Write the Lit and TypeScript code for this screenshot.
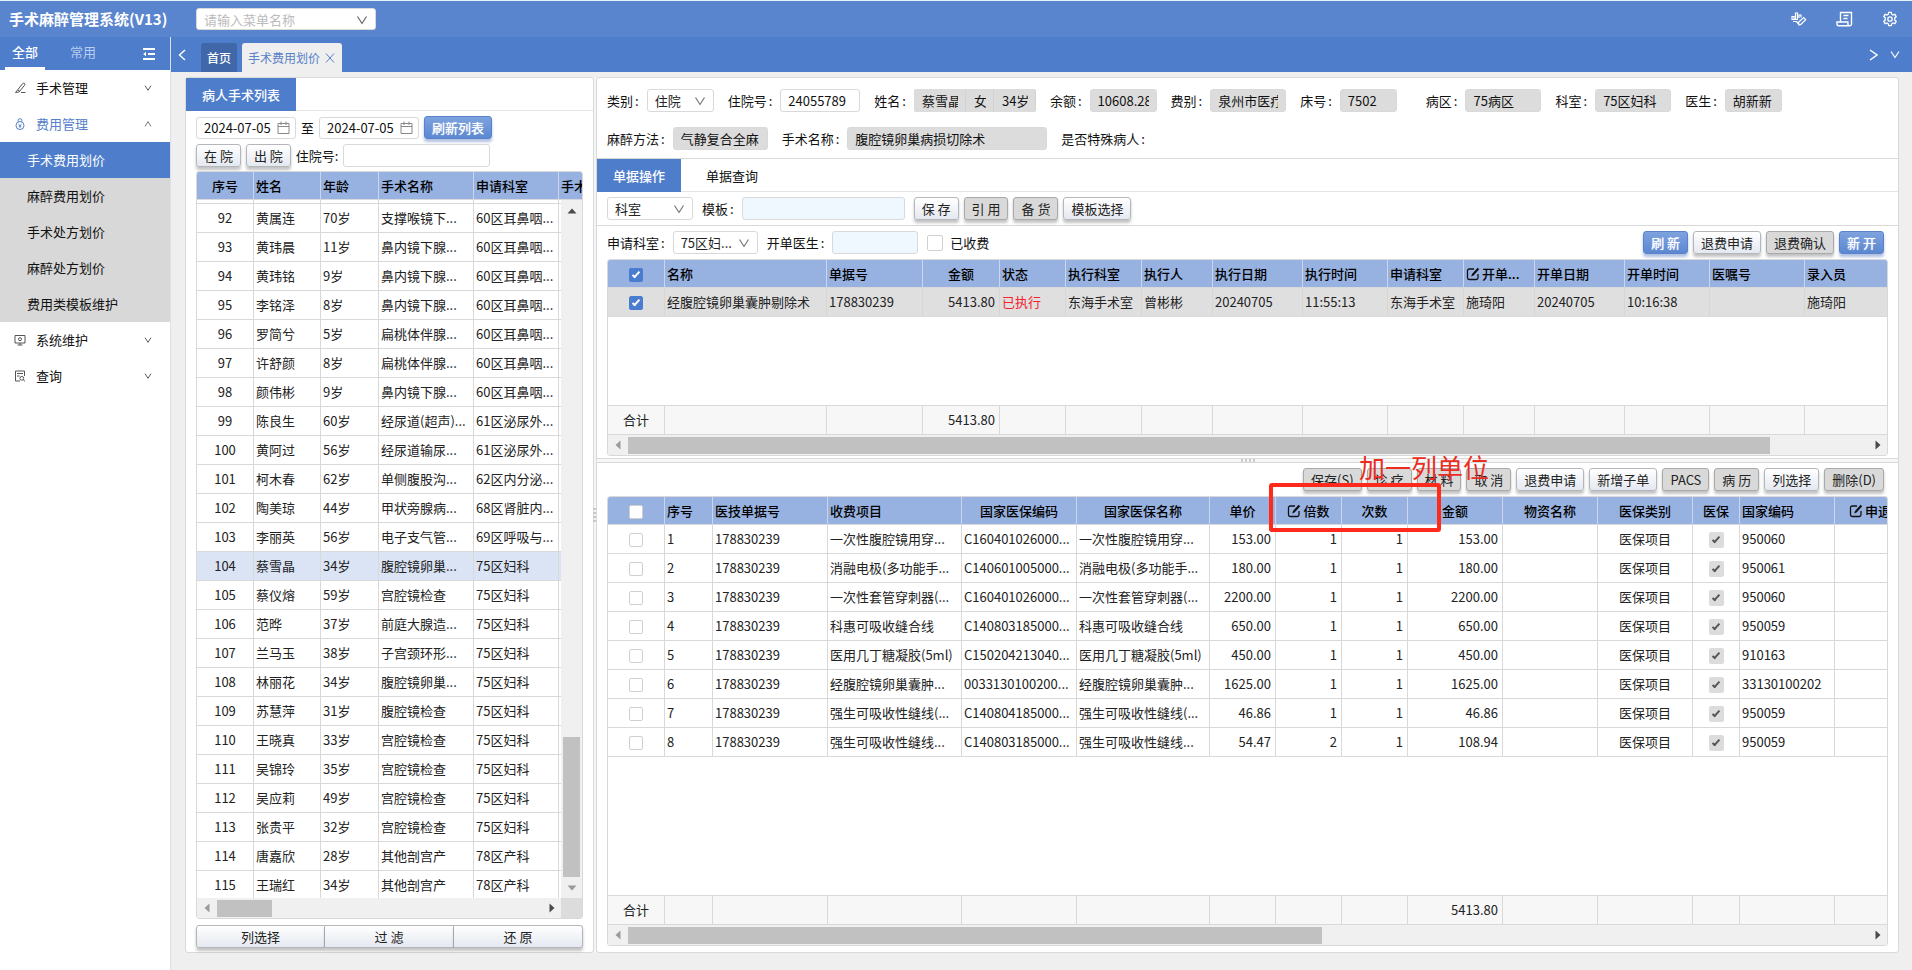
import { LitElement, html, css, svg, nothing, type TemplateResult } from 'lit';
import { customElement, property } from 'lit/decorators.js';
import { classMap } from 'lit/directives/class-map.js';
import { styleMap } from 'lit/directives/style-map.js';

type Align = 'left' | 'center' | 'right';
interface Column {
  title: string;
  /** Width in pixels; 0 takes whatever is left. */
  width: number;
  align?: Align;
  headAlign?: Align | 'indent';
  editable?: boolean;
  kind?: 'check' | 'lock' | 'status';
}

const chevron = (cls = '') => html`<svg class="chev ${cls}" viewBox="0 0 12 12" aria-hidden="true"><path d="M1.5 2.5 6 9.5l4.5-7" fill="none" stroke="currentColor" stroke-width="1.2"/></svg>`;

const base = css`
  *, *::before, *::after { box-sizing: border-box; }
  button, input, select { font: inherit; color: inherit; margin: 0; }
  svg { display: block; flex: none; }
  .chev { width: 12px; height: 12px; }
  .btn {
    height: 23px; padding: 0 7px; border: 1px solid #b4b6bb; border-radius: 3px;
    background: linear-gradient(#ffffff, #e4e8f0); color: #222; line-height: 20px;
    box-shadow: 0 3px 3px rgba(0, 0, 0, 0.24); white-space: nowrap;
  }
  .btn.dim { background: #d9d9d9; border-color: #a9a9a9; }
  .btn.primary {
    background: linear-gradient(#7ea2de, #5b88d1); border-color: #5a83cb; color: #fff;
    box-shadow: 0 3px 3px rgba(60, 100, 180, 0.4); text-shadow: 0 0 1px #fff;
  }
  .field {
    height: 23px; border: 1px solid #d9d9d9; border-radius: 3px; background: #fff;
    padding: 0 7px; min-width: 0; line-height: 21px; outline: none;
  }
  .field.gray { background: #dcdcdc; }
  .field.blue { background: #eff7ff; }
  .select { position: relative; display: inline-flex; color: #222; }
  .select select { width: 100%; appearance: none; padding-right: 20px; }
  .select .chev { position: absolute; right: 8px; top: 6px; color: #777; pointer-events: none; }
  .lab { white-space: nowrap; }
  .colon { margin: 0 8px 0 2px; }
  .check {
    appearance: none; width: 14px; height: 14px; border: 1px solid #d0d0d0; border-radius: 2px;
    background: #fff; display: inline-grid; place-content: center; vertical-align: middle;
  }
  .check:checked { background: #4a7dcf; border-color: #4a7dcf; color: #fff; }
  .check:checked::after {
    content: ''; width: 4px; height: 8px; border: solid currentColor; border-width: 0 2px 2px 0;
    transform: rotate(42deg); margin-top: -2px;
  }
  .check.lock { width: 15px; height: 16px; background: #dcdcdc; border-color: #dcdcdc; color: #555; }
`;

@customElement('scroll-bar')
class ScrollBar extends LitElement {
  @property({ type: Boolean, reflect: true }) vertical = false;
  @property({ type: Number }) start = 0;
  @property({ type: Number }) size = 50;

  static styles = css`
    :host { display: flex; align-items: center; height: 20px; background: #f0f0f0; flex: none; }
    :host([vertical]) { flex-direction: column; width: 21px; height: auto; }
    .arrow { width: 20px; height: 20px; flex: none; fill: #9b9b9b; }
    .arrow.on { fill: #4a4a4a; }
    .track { flex: 1; height: 17px; display: flex; }
    :host([vertical]) .track { height: auto; width: 17px; flex-direction: column; }
    .thumb { background: #c1c1c1; flex: none; }
  `;

  render() {
    const v = this.vertical;
    const gap = `${this.start}%`;
    const len = `${this.size}%`;
    return html`
      <svg class="arrow ${v ? 'on' : ''}" viewBox="0 0 20 20"><path d=${v ? 'M5.5 13.5h9L10 8.5z' : 'M12.5 5.5v9L7.5 10z'} /></svg>
      <div class="track">
        <div style=${styleMap(v ? { flex: `0 0 ${gap}` } : { width: gap })}></div>
        <div class="thumb" style=${styleMap(v ? { flex: `0 0 ${len}` } : { width: len })}></div>
      </div>
      <svg class="arrow ${v ? '' : 'on'}" viewBox="0 0 20 20"><path d=${v ? 'M5.5 7.5h9L10 12.5z' : 'M8.5 5.5v9L13.5 10z'} /></svg>`;
  }
}

@customElement('data-grid')
class DataGrid extends LitElement {
  @property({ attribute: false }) columns: Column[] = [];
  @property({ attribute: false }) rows: string[][] = [];
  @property({ attribute: false }) totals: string[] | null = null;
  @property({ type: Number }) selected = -1;
  @property({ type: Boolean }) allChecked = false;
  @property({ type: Number }) thumb = 50;
  @property({ type: Boolean }) scrolled = false;
  @property() tone: 'gray' | 'blue' = 'gray';

  static styles = [base, css`
    :host { display: flex; flex-direction: column; border: 1px solid #d9d9d9; border-radius: 3px; overflow: hidden; min-height: 0; min-width: 0; background: #fff; box-sizing: border-box; }
    .view { flex: 1; min-height: 0; overflow: hidden; position: relative; }
    table { border-collapse: separate; border-spacing: 0; table-layout: fixed; width: 100%; }
    th, td { height: 29px; padding: 0 2px; border-right: 1px solid #d9d9d9; border-bottom: 1px solid #d9d9d9; line-height: 20px; white-space: nowrap; overflow: hidden; text-align: left; font-weight: 400; color: #222; }
    th { height: 28px; background: #97b2e0; font-weight: 500; color: #000; border-right-color: #c9d6ee; }
    th:last-child, td:last-child { border-right: 0; }
    .center { text-align: center; }
    .right { text-align: right; padding-right: 4px; }
    .indent { padding-left: 14px; }
    .head { display: inline-flex; align-items: center; gap: 2px; vertical-align: middle; }
    .pen { width: 14px; height: 14px; }
    .sel.gray td { background: #dfdfdf; border-right-color: #d6d6d6; }
    .sel.blue td { background: #dae4f5; }
    .red { color: #f5222d; }
    .part td { height: 4px; line-height: 0; padding: 0; }
    .sum { flex: none; border-top: 1px solid #d9d9d9; }
    .sum td { background: #f7f7f7; height: 29px; }
    .vbar { position: absolute; right: 0; top: 28px; bottom: 0; }
    .hrow { display: flex; flex: none; }
    .hrow scroll-bar { flex: 1; }
    .corner { width: 21px; background: #dcdcdc; }
  `];

  private colgroup() {
    return html`<colgroup>${this.columns.map(c => html`<col style=${styleMap(c.width ? { width: `${c.width}px` } : {})}>`)}</colgroup>`;
  }

  private cell(c: Column, value: string, on: boolean): TemplateResult | string {
    if (c.kind === 'check') return html`<input class="check" type="checkbox" aria-label="选择" .checked=${on}>`;
    if (c.kind === 'lock') return html`<input class="check lock" type="checkbox" aria-label="医保" checked disabled>`;
    if (c.kind === 'status') return html`<span class="red">${value}</span>`;
    return value;
  }

  render() {
    return html`
      <div class="view">
        <table>
          ${this.colgroup()}
          <thead><tr>${this.columns.map(c => html`
            <th scope="col" class=${c.headAlign ?? c.align ?? 'left'}>${c.kind === 'check'
              ? html`<input class="check" type="checkbox" aria-label="全选" .checked=${this.allChecked}>`
              : html`<span class="head">${c.editable ? html`<svg class="pen" viewBox="0 0 14 14"><path d="M8 2H3.2A1.7 1.7 0 0 0 1.5 3.7v7.1a1.7 1.7 0 0 0 1.7 1.7h7.1a1.7 1.7 0 0 0 1.7-1.7V7" fill="none" stroke="#111" stroke-width="1.3"/><path d="M5.2 9.4 6 6.9 11.6.8l1.6 1.5-5.6 6.2z" fill="#111"/></svg>` : nothing}${c.title}</span>`}</th>`)}</tr></thead>
          <tbody>
            ${this.scrolled ? html`<tr class="part">${this.columns.map(() => html`<td></td>`)}</tr>` : nothing}
            ${this.rows.map((r, i) => html`<tr class=${classMap({ sel: i === this.selected, [this.tone]: true })}>
              ${this.columns.map((c, j) => html`<td class=${c.align ?? 'left'}>${this.cell(c, r[j] ?? '', i === this.selected)}</td>`)}
            </tr>`)}
          </tbody>
        </table>
        ${this.scrolled ? html`<scroll-bar class="vbar" vertical .start=${78.5} .size=${21.3}></scroll-bar>` : nothing}
      </div>
      ${this.totals ? html`<table class="sum">${this.colgroup()}<tbody><tr>
        ${this.columns.map((c, j) => html`<td class=${c.align ?? 'left'}>${this.totals![j] ?? ''}</td>`)}
      </tr></tbody></table>` : nothing}
      <div class="hrow"><scroll-bar .size=${this.thumb}></scroll-bar>${this.scrolled ? html`<div class="corner"></div>` : nothing}</div>`;
  }
}

const patientCols: Column[] = [
  { title: '序号', width: 57, align: 'center' },
  { title: '姓名', width: 67 },
  { title: '年龄', width: 58 },
  { title: '手术名称', width: 95 },
  { title: '申请科室', width: 85 },
  { title: '手术', width: 0 },
];
const patients = `黄属连,70,支撑喉镜下...,60区耳鼻咽...
黄玮晨,11,鼻内镜下腺...,60区耳鼻咽...
黄玮铭,9,鼻内镜下腺...,60区耳鼻咽...
李铭泽,8,鼻内镜下腺...,60区耳鼻咽...
罗简兮,5,扁桃体伴腺...,60区耳鼻咽...
许舒颜,8,扁桃体伴腺...,60区耳鼻咽...
颜伟彬,9,鼻内镜下腺...,60区耳鼻咽...
陈良生,60,经尿道(超声)...,61区泌尿外...
黄阿过,56,经尿道输尿...,61区泌尿外...
柯木春,62,单侧腹股沟...,62区内分泌...
陶美琼,44,甲状旁腺病...,68区肾脏内...
李丽英,56,电子支气管...,69区呼吸与...
蔡雪晶,34,腹腔镜卵巢...,75区妇科
蔡仪熔,59,宫腔镜检查,75区妇科
范晔,37,前庭大腺造...,75区妇科
兰马玉,38,子宫颈环形...,75区妇科
林丽花,34,腹腔镜卵巢...,75区妇科
苏慧萍,31,腹腔镜检查,75区妇科
王晓真,33,宫腔镜检查,75区妇科
吴锦玲,35,宫腔镜检查,75区妇科
吴应莉,49,宫腔镜检查,75区妇科
张贵平,32,宫腔镜检查,75区妇科
唐嘉欣,28,其他剖宫产,78区产科
王瑞红,34,其他剖宫产,78区产科`.split('\n').map((line, i) => {
  const [name, age, op, dept] = line.split(',');
  return [String(92 + i), name, `${age}岁`, op, dept, ''];
});

const billCols: Column[] = [
  { title: '', width: 57, align: 'center', kind: 'check' },
  { title: '名称', width: 162 },
  { title: '单据号', width: 96 },
  { title: '金额', width: 77, align: 'right', headAlign: 'center' },
  { title: '状态', width: 66, kind: 'status' },
  { title: '执行科室', width: 76 },
  { title: '执行人', width: 71 },
  { title: '执行日期', width: 90 },
  { title: '执行时间', width: 85 },
  { title: '申请科室', width: 76 },
  { title: '开单...', width: 71, editable: true },
  { title: '开单日期', width: 90 },
  { title: '开单时间', width: 85 },
  { title: '医嘱号', width: 95 },
  { title: '录入员', width: 0 },
];
const bills = [['', '经腹腔镜卵巢囊肿剔除术', '178830239', '5413.80', '已执行', '东海手术室', '曾彬彬', '20240705', '11:55:13', '东海手术室', '施琦阳', '20240705', '10:16:38', '', '施琦阳']];

const itemCols: Column[] = [
  { title: '', width: 57, align: 'center', kind: 'check' },
  { title: '序号', width: 48 },
  { title: '医技单据号', width: 115 },
  { title: '收费项目', width: 134 },
  { title: '国家医保编码', width: 115, headAlign: 'center' },
  { title: '国家医保名称', width: 133, headAlign: 'center' },
  { title: '单价', width: 66, align: 'right', headAlign: 'center' },
  { title: '倍数', width: 66, align: 'right', headAlign: 'center', editable: true },
  { title: '次数', width: 66, align: 'right', headAlign: 'center' },
  { title: '金额', width: 95, align: 'right', headAlign: 'center' },
  { title: '物资名称', width: 95, headAlign: 'center' },
  { title: '医保类别', width: 95, align: 'center' },
  { title: '医保', width: 47, align: 'center', kind: 'lock' },
  { title: '国家编码', width: 95 },
  { title: '申退', width: 0, headAlign: 'indent', editable: true },
];
const items = `一次性腹腔镜用穿...|C160401026000...|153.00|1|153.00|950060
消融电极(多功能手...|C140601005000...|180.00|1|180.00|950061
一次性套管穿刺器(...|C160401026000...|2200.00|1|2200.00|950060
科惠可吸收缝合线|C140803185000...|650.00|1|650.00|950059
医用几丁糖凝胶(5ml)|C150204213040...|450.00|1|450.00|910163
经腹腔镜卵巢囊肿...|0033130100200...|1625.00|1|1625.00|33130100202
强生可吸收性缝线(...|C140804185000...|46.86|1|46.86|950059
强生可吸收性缝线...|C140803185000...|54.47|2|108.94|950059`.split('\n').map((line, i) => {
  const [name, code, price, times, sum, nat] = line.split('|');
  return ['', String(i + 1), '178830239', name, code, name, price, times, '1', sum, '', '医保项目', '', nat, ''];
});

const menuIcons = {
  scalpel: svg`<path d="M1.5 10.5 8.6 1.6c1.4-1.3 3 .1 2 1.6L5 10l-3.5.5zM4 8l2 1.6M7 10.5h4.5"/>`,
  purse: svg`<circle cx="6" cy="7.5" r="4"/><path d="M4.3 3.6C3.5 1.5 4.6.8 6 .8s2.500.7 1.700 2.800"/><path d="M4.500 6.200 6 7.600l1.500-1.400M6 7.600v2.200M4.700 8.200h2.600"/>`,
  screen: svg`<path d="M1 1.500h10v7.500H1zM3.500 11h5M6 9v2"/><circle cx="6" cy="5.200" r="1.500"/>`,
  query: svg`<path d="M10.500 6V1h-9v10H6M3 3.500h6M3 6h2.500"/><circle cx="7.800" cy="8.300" r="1.900"/><path d="m9.200 9.700 1.800 1.600"/>`,
};

@customElement('app-root')
class AppRoot extends LitElement {
  static styles = [base, css`
    :host { display: flex; flex-direction: column; height: 100vh; background: #efefef; font: 13px/20px "Noto Sans CJK SC", "Noto Sans", sans-serif; color: #111; border-top: 1px solid #e6f3fb; box-sizing: border-box; }
    .top { height: 36px; flex: none; background: #5985ce; display: flex; align-items: center; padding: 0 14px 0 9px; }
    h1 { margin: 0; width: 187px; font-size: 15px; line-height: 22px; font-weight: 700; color: #fff; white-space: nowrap; }
    .finder { width: 180px; color: #bbb; }
    .finder .field { height: 22px; }
    .finder .chev { color: #666; }
    .tools { margin-left: auto; display: flex; align-items: center; gap: 29px; color: #fff; }
    .icon { border: 0; background: none; padding: 0; color: inherit; display: flex; align-items: center; }
    .icon svg { fill: none; stroke: currentColor; }
    .body { flex: 1; display: flex; min-height: 0; }
    nav { width: 171px; flex: none; background: #fff; border-right: 1px solid #dcdfe6; }
    .kinds { height: 33px; background: #4e7ecb; color: #b9cdf0; display: flex; align-items: stretch; padding: 0 14px 0 5px; }
    .kinds button { border: 0; background: none; width: 40px; padding: 0; margin-right: 18px; border-bottom: 3px solid transparent; }
    .kinds .on { color: #fff; border-color: #fff; font-weight: 500; }
    .kinds .icon { width: 14px; margin: 3px 0 0 auto; color: #fff; justify-content: center; }
    ul { list-style: none; margin: 0; padding: 0; }
    .item { height: 36px; display: flex; align-items: center; padding: 0 18px 0 14px; color: #111; text-decoration: none; }
    .item > svg:first-child { width: 12px; height: 12px; margin-right: 10px; fill: none; stroke: #555; stroke-width: 1; }
    .item .chev { margin-left: auto; width: 8px; height: 8px; color: #333; }
    .item.open { color: #5680c9; }
    .item.open > svg:first-child { stroke: #5680c9; }
    .item .chev.up { transform: rotate(180deg); color: #555; }
    .sub { background: #d8d8d8; }
    .sub .item { padding-left: 27px; }
    .sub .on { background: #4e7ecb; color: #fff; }
    main { flex: 1; min-width: 0; display: flex; flex-direction: column; }
    .tabs { height: 35px; flex: none; background: #4e7ecb; display: flex; align-items: flex-end; color: #fff; font-size: 12px; padding: 0 12px 0 7px; }
    .tabs .arr { height: 35px; }
    .tab { height: 29px; border-radius: 3px 3px 0 0; display: flex; align-items: center; gap: 5px; padding: 0 6px; color: #fff; text-decoration: none; background: #4067a7; }
    .home { margin-left: 15px; font-weight: 500; }
    .tab.on { margin-left: 5px; background: #efefef; color: #5680c9; padding-right: 7px; }
    .tab .icon svg { stroke-width: 1; }
    .ends { margin-left: auto; display: flex; gap: 12px; }
    .work { flex: 1; min-height: 0; display: flex; margin: 5px 13px 17px 14px; }
    .left { width: 409px; flex: none; background: #fff; border: 1px solid #d9d9d9; border-radius: 3px; display: flex; flex-direction: column; }
    .vsplit { width: 2px; flex: none; background: #f5f5f5; display: grid; place-content: center; gap: 2px; }
    .vsplit i { width: 4px; height: 2px; background: #c8c8c8; }
    .right { flex: 1; min-width: 0; background: #fff; border: 1px solid #d9d9d9; border-radius: 3px; display: flex; flex-direction: column; }
    .ptabs { display: flex; height: 33px; flex: none; border-bottom: 1px solid #e4e4e4; }
    .ptabs button { border: 0; background: none; padding: 0 16px; height: 33px; margin-right: 9px; }
    .ptabs .on { background: #4e7ecb; color: #fff; font-weight: 500; }
    .lform { padding: 5px 10px 4px; display: grid; gap: 5px; }
    .line { display: flex; align-items: center; gap: 5px; }
    .date { position: relative; width: 100px; }
    .date .field { width: 100%; height: 22px; padding-right: 20px; display: block; }
    .date svg { position: absolute; right: 6px; top: 4px; width: 13px; height: 14px; fill: none; stroke: #888; }
    .line .wide { width: 147px; }
    .left data-grid { flex: 1; margin: 0 10px; }
    .trio { display: grid; grid-template-columns: repeat(3, 1fr); margin: 6px 10px 4px; flex: none; }
    .trio .btn { border-radius: 0; border-left-width: 0; }
    .trio .btn:first-child { border-radius: 3px 0 0 3px; border-left-width: 1px; }
    .trio .btn:last-child { border-radius: 0 3px 3px 0; }
    .info { display: flex; flex-direction: column; gap: 15px; padding: 11px 10px 8px; border-bottom: 1px solid #d9d9d9; flex: none; }
    .fields { display: flex; column-gap: 14px; align-items: center; }
    .pair { display: flex; align-items: center; }
    .pair.spaced { margin-right: 15px; }
    .triple { display: flex; border-radius: 3px; overflow: hidden; background: #dcdcdc; }
    .triple .field { border-color: #dcdcdc; border-right-color: #d2d2d2; border-radius: 0; }
    .w-name { width: 52px; }
    .w-sex { width: 28px; }
    .w-age { width: 42px; }
    .bar { display: flex; align-items: center; gap: 5px; padding: 5px 14px 5px 10px; height: 33px; flex: none; }
    .bar .pair { margin-right: 4px; }
    .bar.under { height: 34px; border-bottom: 1px solid #d9d9d9; }
    .push { margin-left: auto; }
    .tick { display: flex; align-items: center; gap: 7px; }
    .tick .check { width: 16px; height: 16px; }
    .grid1 { height: 197px; flex: none; margin: 0 10px 2px; }
    .hsplit { height: 5px; flex: none; border: solid #d9d9d9; border-width: 1px 0; background: #f7f7f7; display: flex; justify-content: center; gap: 2px; }
    .hsplit i { width: 2px; background: #ccc; }
    .lower { flex: 1; min-height: 0; display: flex; flex-direction: column; position: relative; }
    .lower data-grid { flex: 1; margin: 0 10px 6px; }
    .mark { position: absolute; left: 672px; top: 20px; width: 172px; height: 49px; border: 4px solid #ff2a1c; border-radius: 3px; pointer-events: none; }
    .note { position: absolute; left: 762px; top: -12px; color: #ea2d1f; font-size: 26px; line-height: 32px; white-space: nowrap; pointer-events: none; }
  `];

  private choice(text: string, width: number, label: string, id?: string) {
    return html`<span class="select" style=${styleMap({ width: `${width}px` })}><select class="field" id=${id ?? nothing} aria-label=${label}><option>${text}</option></select>${chevron()}</span>`;
  }

  private input(id: string, label: string, value: string, width: number, cls = 'gray', extra = '') {
    return html`<span class="pair ${extra}"><label class="lab" for=${id}>${label}<span class="colon">:</span></label><input id=${id} class="field ${cls}" ?readonly=${cls === 'gray'} .value=${value} style=${styleMap({ width: `${width}px` })}></span>`;
  }

  private date(label: string) {
    return html`<span class="date"><input class="field" aria-label=${label} value="2024-07-05"><svg viewBox="0 0 13 14"><path d="M1 2.500h11v10H1zM1 5.500h11M4 .5v3.500M9 .5v3.500"/></svg></span>`;
  }

  private menu(icon: TemplateResult | unknown, text: string, open = false) {
    return html`<a class="item ${open ? 'open' : ''}" href="#"><svg viewBox="0 0 12 12">${icon}</svg>${text}${chevron(open ? 'up' : '')}</a>`;
  }

  private actions(list: [string, string][]) {
    return list.map(([t, c]) => html`<button class="btn ${c}" type="button">${t}</button>`);
  }

  render() {
    return html`
      <header class="top">
        <h1>手术麻醉管理系统(V13)</h1>
        <span class="select finder"><select class="field" aria-label="菜单名称"><option>请输入菜单名称</option></select>${chevron()}</span>
        <div class="tools">
          <button class="icon" aria-label="统计"><svg width="16" height="16" viewBox="0 0 16 16" stroke-width="1.200"><path d="M1 8.500V5.500h2v3M4.500 8.500V2h2v6.500M8 7V4h2v2.500M.5 8.500h6.500M2 10.500h4M8 14l-.5-2.800 5.200-4.700 2 2.200L9.800 13.400zM5.500 10.500 8 13.500"/></svg></button>
          <button class="icon" aria-label="单据"><svg width="17" height="16" viewBox="0 0 17 16" stroke-width="1.400"><path d="M4.500 11V1.500h11V13a1.800 1.800 0 0 1-3.600 0v-2H1v2a1.800 1.800 0 0 0 1.800 1.800h11M7.500 4.500h5M7.500 7.500h4"/></svg></button>
          <button class="icon" aria-label="设置"><svg width="16" height="16" viewBox="0 0 16 16" stroke-width="1.300"><circle cx="8" cy="8" r="2.200"/><path d="M6.700 1.300h2.600l.4 1.900 1.300.8 1.900-.7 1.300 2.300-1.400 1.300v2.200l1.400 1.300-1.300 2.300-1.900-.7-1.300.8-.4 1.900H6.700l-.4-1.900-1.300-.8-1.900.7-1.300-2.300 1.400-1.300V6.900L1.800 5.600l1.300-2.300 1.900.7 1.300-.8z"/></svg></button>
        </div>
      </header>
      <div class="body">
        <nav>
          <div class="kinds">
            <button class="on">全部</button><button>常用</button>
            <button class="icon" aria-label="收起菜单"><svg width="14" height="14" viewBox="0 0 14 14" stroke-width="2"><path d="M1 2h12M6 7h7M1 12h12"/><path d="M4 4.800 1.200 7 4 9.200z" fill="currentColor" stroke="none"/></svg></button>
          </div>
          <ul>
            <li>${this.menu(menuIcons.scalpel, '手术管理')}</li>
            <li>${this.menu(menuIcons.purse, '费用管理', true)}
              <ul class="sub">${['手术费用划价', '麻醉费用划价', '手术处方划价', '麻醉处方划价', '费用类模板维护'].map((t, i) => html`<li><a class="item ${i ? '' : 'on'}" href="#">${t}</a></li>`)}</ul>
            </li>
            <li>${this.menu(menuIcons.screen, '系统维护')}</li>
            <li>${this.menu(menuIcons.query, '查询')}</li>
          </ul>
        </nav>
        <main>
          <div class="tabs">
            <button class="icon arr" aria-label="上一页"><svg width="8" height="12" viewBox="0 0 8 12" stroke-width="1.400"><path d="M7 1 1.500 6 7 11"/></svg></button>
            <a class="tab home" href="#">首页</a>
            <span class="tab on">手术费用划价<button class="icon" aria-label="关闭"><svg width="10" height="10" viewBox="0 0 10 10"><path d="m1 .5 8 9M9 .5l-8 9"/></svg></button></span>
            <div class="ends">
              <button class="icon arr" aria-label="下一页"><svg width="9" height="12" viewBox="0 0 9 12" stroke-width="1.400"><path d="m1 1 7 5-7 5"/></svg></button>
              <button class="icon arr" aria-label="更多"><svg width="10" height="10" viewBox="0 0 10 10" stroke-width="1.200"><path d="m1 1.500 4 6 4-6"/></svg></button>
            </div>
          </div>
          <div class="work">
            <section class="left">
              <div class="ptabs"><button class="on">病人手术列表</button></div>
              <div class="lform">
                <div class="line">${this.date('开始日期')}<span>至</span>${this.date('结束日期')}<button class="btn primary">刷新列表</button></div>
                <div class="line"><button class="btn">在 院</button><button class="btn">出 院</button><label class="lab" for="in-no">住院号:</label><input id="in-no" class="field wide"></div>
              </div>
              <data-grid .columns=${patientCols} .rows=${patients} .selected=${12} .tone=${'blue'} .scrolled=${true} .thumb=${17}></data-grid>
              <div class="trio">${this.actions([['列选择', ''], ['过 滤', ''], ['还 原', '']])}</div>
            </section>
            <div class="vsplit"><i></i><i></i><i></i><i></i></div>
            <section class="right">
              <div class="info">
                <div class="fields">
                  <span class="pair"><label class="lab" for="kind">类别<span class="colon">:</span></label>${this.choice('住院', 67, '类别', 'kind')}</span>
                  ${this.input('no', '住院号', '24055789', 80, '')}
                  <span class="pair"><label class="lab" for="name">姓名<span class="colon">:</span></label><span class="triple">
                    <input id="name" class="field gray w-name" readonly value="蔡雪晶"><input aria-label="性别" class="field gray w-sex" readonly value="女"><input aria-label="年龄" class="field gray w-age" readonly value="34岁"></span></span>
                  ${this.input('bal', '余额', '10608.28', 67)}
                  ${this.input('fee', '费别', '泉州市医疗', 76)}
                  ${this.input('bed', '床号', '7502', 57, 'gray', 'spaced')}
                  ${this.input('ward', '病区', '75病区', 76)}
                  ${this.input('dept', '科室', '75区妇科', 76)}
                  ${this.input('doc', '医生', '胡新新', 57)}
                </div>
                <div class="fields">
                  ${this.input('anes', '麻醉方法', '气静复合全麻', 95)}
                  ${this.input('op', '手术名称', '腹腔镜卵巢病损切除术', 200)}
                  <span class="lab">是否特殊病人<span class="colon">:</span></span>
                </div>
              </div>
              <div class="ptabs"><button class="on">单据操作</button><button>单据查询</button></div>
              <div class="bar under">
                <span class="pair">${this.choice('科室', 86, '模板范围')}</span>
                ${this.input('tpl', '模板', '', 163, 'blue')}
                ${this.actions([['保 存', ''], ['引 用', 'dim'], ['备 货', 'dim'], ['模板选择', '']])}
              </div>
              <div class="bar">
                <span class="pair"><label class="lab" for="req">申请科室<span class="colon">:</span></label>${this.choice('75区妇...', 85, '申请科室', 'req')}</span>
                ${this.input('by', '开单医生', '', 86, 'blue')}
                <label class="tick"><input class="check" type="checkbox">已收费</label>
                <span class="push"></span>
                ${this.actions([['刷 新', 'primary'], ['退费申请', ''], ['退费确认', 'dim'], ['新 开', 'primary']])}
              </div>
              <data-grid class="grid1" .columns=${billCols} .rows=${bills} .selected=${0} .allChecked=${true} .totals=${['合计', '', '', '5413.80']} .thumb=${92.2}></data-grid>
              <div class="hsplit"><i></i><i></i><i></i><i></i></div>
              <div class="lower">
                <div class="bar"><span class="push"></span>
                  ${this.actions([['保存(S)', 'dim'], ['诊 疗', 'dim'], ['材 料', 'dim'], ['取 消', 'dim'], ['退费申请', ''], ['新增子单', ''], ['PACS', 'dim'], ['病 历', 'dim'], ['列选择', ''], ['删除(D)', 'dim']])}
                </div>
                <data-grid .columns=${itemCols} .rows=${items} .totals=${['合计', '', '', '', '', '', '', '', '', '5413.80']} .thumb=${56}></data-grid>
                <div class="mark"></div>
                <div class="note">加一列单位</div>
              </div>
            </section>
          </div>
        </main>
      </div>`;
  }
}
